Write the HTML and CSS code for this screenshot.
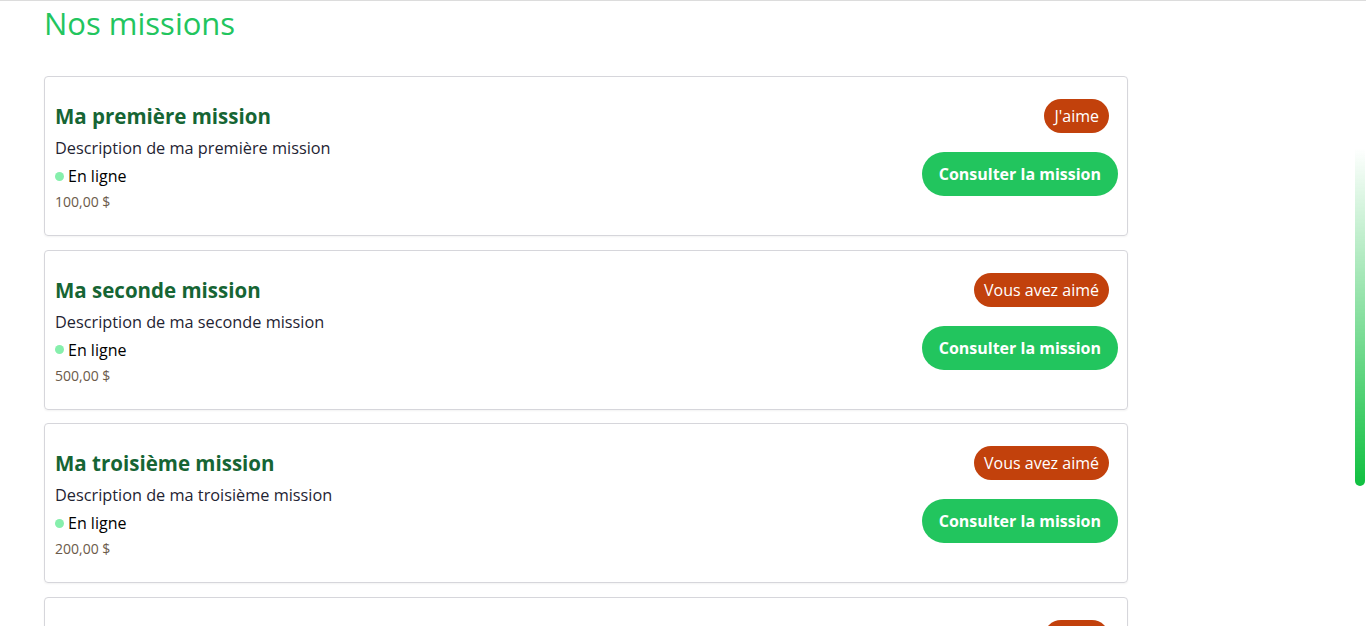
FILE: index.html
```html
<!DOCTYPE html>
<html lang="fr">
<head>
<meta charset="utf-8">
<title>Nos missions</title>
<link rel="stylesheet" href="styles.css">
</head>
<body>
<div class="topline"></div>
<main class="page">
  <h2 class="page-title">Nos missions</h2>
  <div class="list">
    <article class="card">
      <div class="info">
        <h3 class="title">Ma première mission</h3>
        <p class="desc">Description de ma première mission</p>
        <p class="status"><span class="dot"></span>En ligne</p>
        <p class="price">100,00 $</p>
      </div>
      <div class="actions">
        <span class="badge">J'aime</span>
        <button class="btn">Consulter la mission</button>
      </div>
    </article>
    <article class="card">
      <div class="info">
        <h3 class="title">Ma seconde mission</h3>
        <p class="desc">Description de ma seconde mission</p>
        <p class="status"><span class="dot"></span>En ligne</p>
        <p class="price">500,00 $</p>
      </div>
      <div class="actions">
        <span class="badge">Vous avez aimé</span>
        <button class="btn">Consulter la mission</button>
      </div>
    </article>
    <article class="card">
      <div class="info">
        <h3 class="title">Ma troisième mission</h3>
        <p class="desc">Description de ma troisième mission</p>
        <p class="status"><span class="dot"></span>En ligne</p>
        <p class="price">200,00 $</p>
      </div>
      <div class="actions">
        <span class="badge">Vous avez aimé</span>
        <button class="btn">Consulter la mission</button>
      </div>
    </article>
    <article class="card">
      <div class="info">
        <h3 class="title">Ma quatrième mission</h3>
        <p class="desc">Description de ma quatrième mission</p>
        <p class="status"><span class="dot"></span>En ligne</p>
        <p class="price">300,00 $</p>
      </div>
      <div class="actions">
        <span class="badge">J'aime</span>
        <button class="btn">Consulter la mission</button>
      </div>
    </article>
  </div>
</main>
<div class="scroll-thumb"></div>
</body>
</html>
```

FILE: styles.css
```css
html, body {
  margin: 0;
  padding: 0;
  background: #fff;
  overflow: hidden;
  height: 626px;
}
body {
  font-family: "Open Sans", "Liberation Sans", sans-serif;
  color: #212529;
}
.topline {
  height: 1px;
  background: #dcdcdc;
}
.page {
  width: 1084px;
  margin-left: 44px;
}
.page-title {
  margin: 2px 0 0 0;
  font-size: 31px;
  font-weight: 400;
  line-height: 40px;
  color: #22c55e;
}
.list {
  margin-top: 33px;
  display: flex;
  flex-direction: column;
  gap: 13.7px;
}
.card {
  display: flex;
  align-items: center;
  justify-content: space-between;
  min-height: 158px;
  padding: 0 9px 0 10px;
  border: 1px solid #d6d6db;
  border-radius: 4px;
  box-shadow: 0 1px 2px rgba(0,0,0,0.05);
}
.info {
  display: flex;
  flex-direction: column;
  padding-top: 4px;
}
.title {
  margin: 0 0 8px;
  font-size: 20.5px;
  line-height: 24px;
  font-weight: 700;
  color: #166534;
}
.desc {
  margin: 0 0 4px;
  font-size: 16.3px;
  line-height: 24px;
  color: #1f2433;
}
.status {
  margin: 0 0 3px;
  font-size: 16px;
  line-height: 24px;
  color: #000;
  display: flex;
  align-items: center;
}
.dot {
  width: 9px;
  height: 9px;
  border-radius: 50%;
  background: #86efac;
  margin-right: 4px;
}
.price {
  margin: 0;
  font-size: 14px;
  line-height: 21px;
  color: #6b5a4a;
}
.actions {
  display: flex;
  flex-direction: column;
  align-items: flex-end;
  gap: 19px;
  padding-bottom: 17px;
}
.badge {
  height: 34px;
  line-height: 34px;
  padding: 0 10px;
  margin-right: 9px;
  border-radius: 17px;
  background: #c2410c;
  color: #fff;
  font-size: 16px;
}
.btn {
  height: 44px;
  padding: 0 17px;
  border: none;
  border-radius: 22px;
  background: #22c55e;
  color: #fff;
  font-family: inherit;
  font-size: 16px;
  font-weight: 700;
}
.scroll-thumb {
  position: fixed;
  right: 1px;
  top: 148px;
  width: 10px;
  height: 338px;
  border-radius: 0 0 5px 5px;
  background: linear-gradient(to bottom, rgba(16,192,64,0), #10c040);
}
```
